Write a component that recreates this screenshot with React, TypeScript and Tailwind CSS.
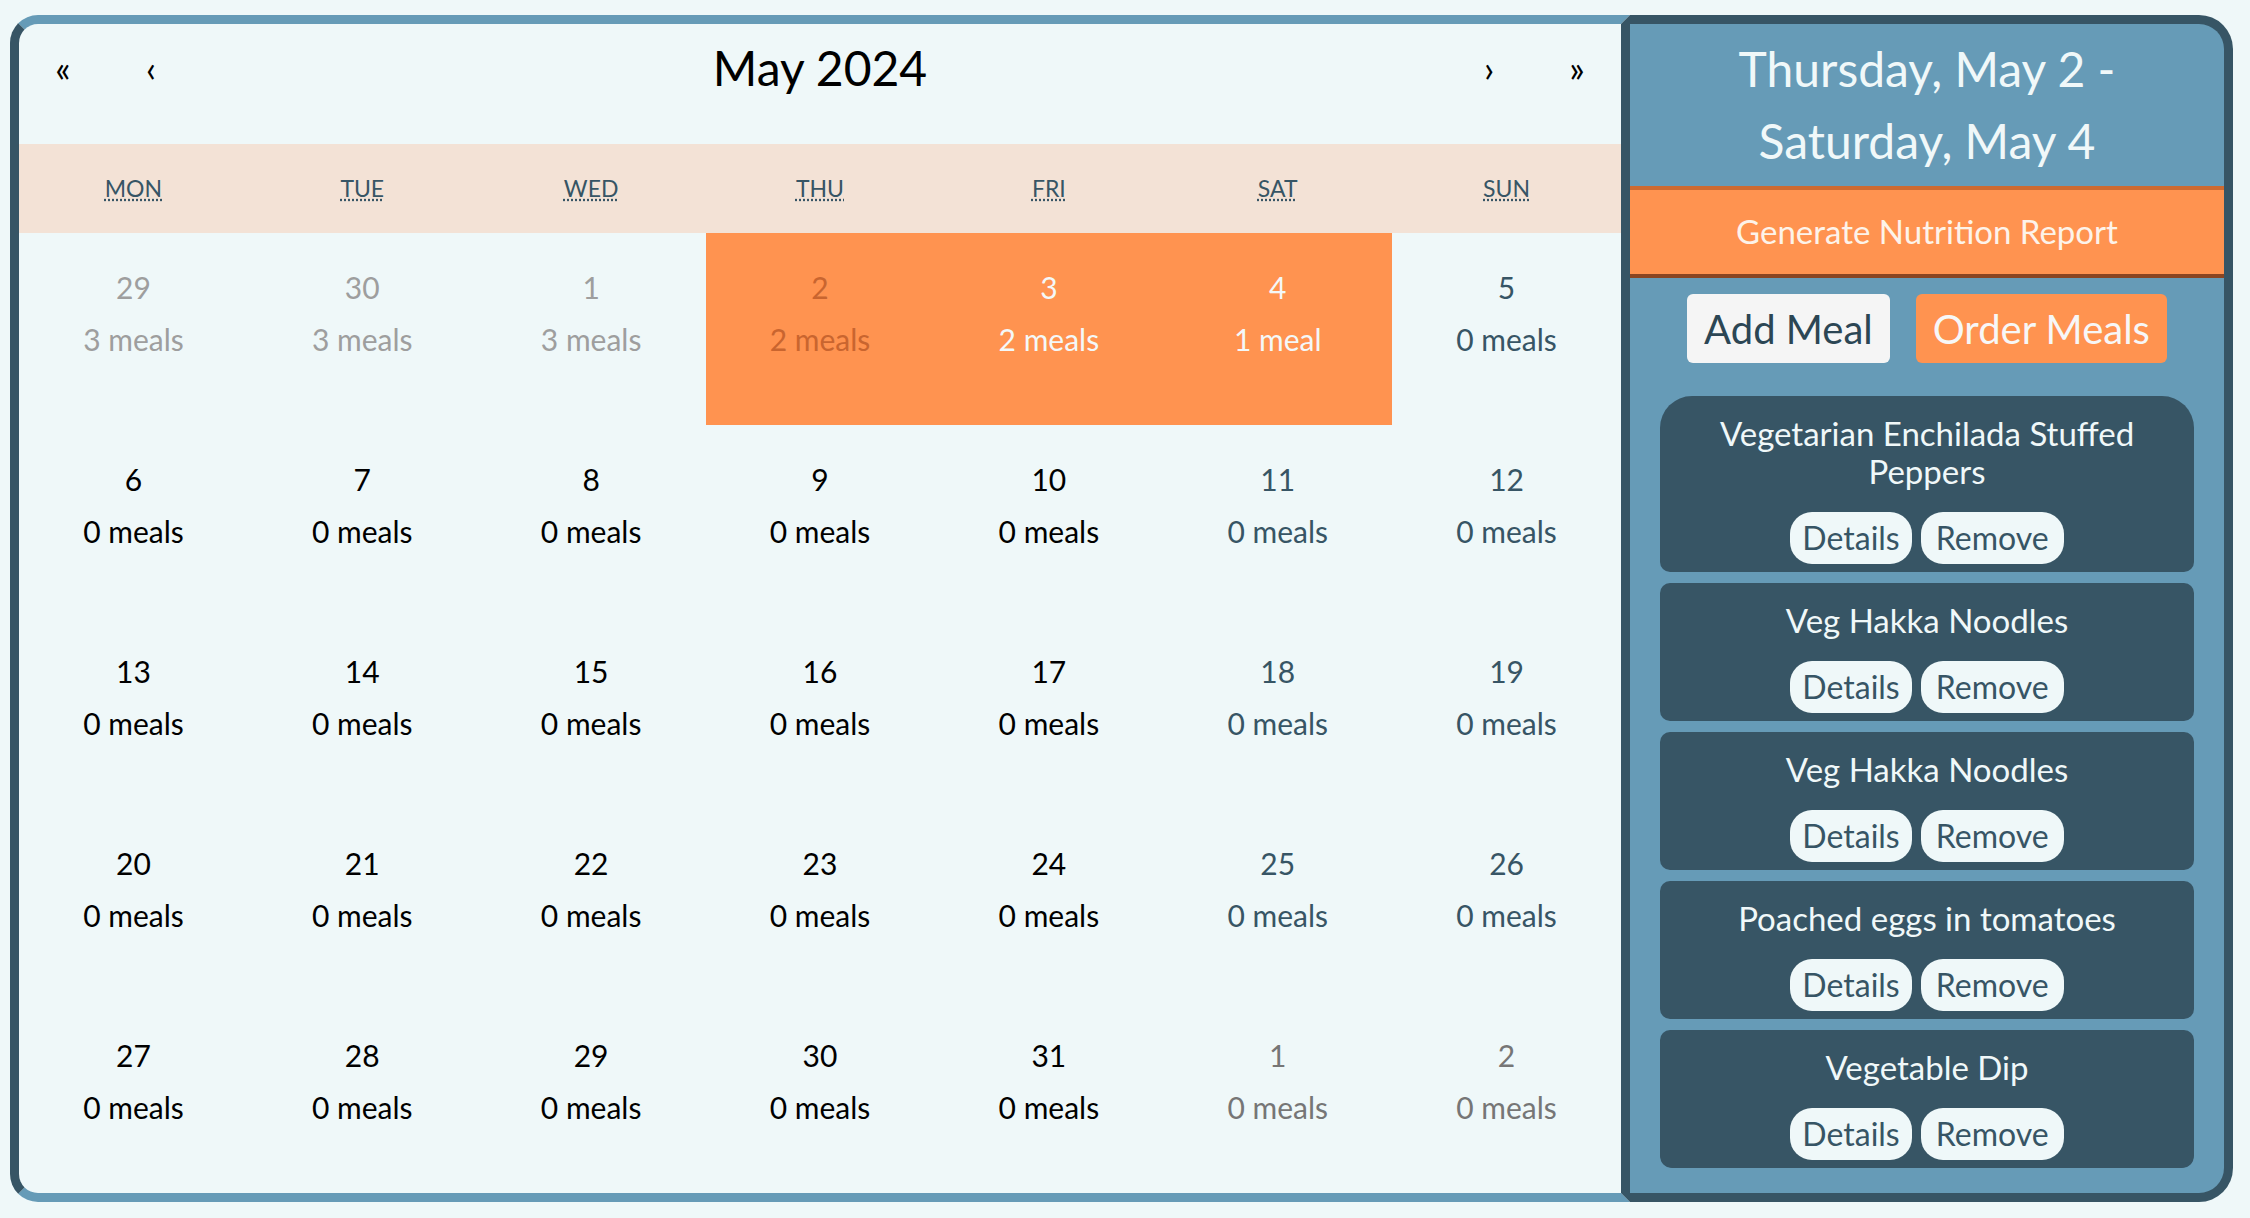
import React from "react";

type Day = {
  n: number;
  meals: number;
  tone: "past" | "next" | "weekday" | "weekend" | "today" | "picked";
};

const weeks: Day[][] = [
  [
    { n: 29, meals: 3, tone: "past" },
    { n: 30, meals: 3, tone: "past" },
    { n: 1, meals: 3, tone: "past" },
    { n: 2, meals: 2, tone: "today" },
    { n: 3, meals: 2, tone: "picked" },
    { n: 4, meals: 1, tone: "picked" },
    { n: 5, meals: 0, tone: "weekend" },
  ],
  ...[6, 13, 20].map((start) =>
    Array.from({ length: 7 }, (_, i) => ({
      n: start + i,
      meals: 0,
      tone: (i < 5 ? "weekday" : "weekend") as Day["tone"],
    })),
  ),
  [
    { n: 27, meals: 0, tone: "weekday" },
    { n: 28, meals: 0, tone: "weekday" },
    { n: 29, meals: 0, tone: "weekday" },
    { n: 30, meals: 0, tone: "weekday" },
    { n: 31, meals: 0, tone: "weekday" },
    { n: 1, meals: 0, tone: "next" },
    { n: 2, meals: 0, tone: "next" },
  ],
];

const weekdays = [
  ["MON", "Monday"],
  ["TUE", "Tuesday"],
  ["WED", "Wednesday"],
  ["THU", "Thursday"],
  ["FRI", "Friday"],
  ["SAT", "Saturday"],
  ["SUN", "Sunday"],
];

const meals = [
  "Vegetarian Enchilada Stuffed Peppers",
  "Veg Hakka Noodles",
  "Veg Hakka Noodles",
  "Poached eggs in tomatoes",
  "Vegetable Dip",
];

const toneClass: Record<Day["tone"], string> = {
  past: "text-[#9e9e9e]",
  next: "text-[#767676]",
  weekday: "text-black",
  weekend: "text-[#375565]",
  today: "bg-[#ff9350] text-[#c9652f]",
  picked: "bg-[#ff9350] text-[#f4f8f8]",
};

function DayCell({ day }: { day: Day }) {
  return (
    <button className={`flex h-[192px] flex-col items-center pt-[36px] text-[30px] leading-[36px] ${toneClass[day.tone]}`}>
      <span>{day.n}</span>
      <span className="mt-[16px]">
        {day.meals} {day.meals === 1 ? "meal" : "meals"}
      </span>
    </button>
  );
}

function NavButton({ children }: { children: React.ReactNode }) {
  return <button className="w-[88px] text-[36px] text-black">{children}</button>;
}

export default function App() {
  return (
    <div
      className="min-h-screen bg-[#eff8f9] pl-[10px] pr-[17px] pt-[15px]"
      style={{ fontFamily: "Lato, 'Noto Sans', sans-serif" }}
    >
      <div className="flex h-[1187px]">
        {/* calendar */}
        <section className="flex flex-1 flex-col rounded-l-[28px] border-[9px] border-x-[#375565] border-y-[#669bb7] bg-[#eff8f9]">
          <nav className="mb-[32px] flex h-[88px] items-center">
            <NavButton>«</NavButton>
            <NavButton>‹</NavButton>
            <span className="flex-1 text-center text-[48px] text-black">May 2024</span>
            <NavButton>›</NavButton>
            <NavButton>»</NavButton>
          </nav>

          <div className="grid h-[89px] grid-cols-7 bg-[#f3e2d6]">
            {weekdays.map(([short, full]) => (
              <div key={short} className="flex items-center justify-center text-[23px] text-[#375565]">
                <abbr title={full}>{short}</abbr>
              </div>
            ))}
          </div>

          <div className="grid grid-cols-7">
            {weeks.flat().map((d, i) => (
              <DayCell key={i} day={d} />
            ))}
          </div>
        </section>

        {/* selected range panel */}
        <aside className="flex w-[603px] flex-col rounded-r-[34px] border-[9px] border-l-0 border-[#375565] bg-[#669bb7]">
          <h2 className="h-[162px] pt-[9px] text-center text-[48px] leading-[72px] text-[#f0f8f9]">
            Thursday, May 2 -<br />
            Saturday, May 4
          </h2>

          <button className="h-[92px] border-y-4 border-b-[#8a4522] border-t-[#cd6a30] bg-[#ff9350] text-[33px] text-[#fdf3ea]">
            Generate Nutrition Report
          </button>

          <div className="mt-[16px] flex justify-center gap-[26px]">
            <button className="h-[69px] rounded-[6px] bg-[#f5f5f5] px-[17px] text-[40px] text-[#2c4654]">Add Meal</button>
            <button className="h-[69px] rounded-[6px] bg-[#ff9350] px-[17px] text-[40px] text-[#f7f7f7]">Order Meals</button>
          </div>

          <ul className="mx-[30px] mt-[33px] flex flex-col gap-[11px] overflow-hidden rounded-b-[12px] rounded-t-[32px]">
            {meals.map((m, i) => (
              <li key={i} className="flex flex-col items-center rounded-[10px] bg-[#375565] px-[24px] pb-[8px] pt-[18px]">
                <span className="text-center text-[33px] leading-[38px] text-[#f0f8f9]">{m}</span>
                <div className="mt-[22px] flex gap-[9px]">
                  <button className="h-[52px] rounded-[22px] bg-[#eff8f9] px-[12px] text-[32px] text-[#375565]">Details</button>
                  <button className="h-[52px] rounded-[22px] bg-[#eff8f9] px-[15px] text-[32px] text-[#375565]">Remove</button>
                </div>
              </li>
            ))}
          </ul>
        </aside>
      </div>
    </div>
  );
}
